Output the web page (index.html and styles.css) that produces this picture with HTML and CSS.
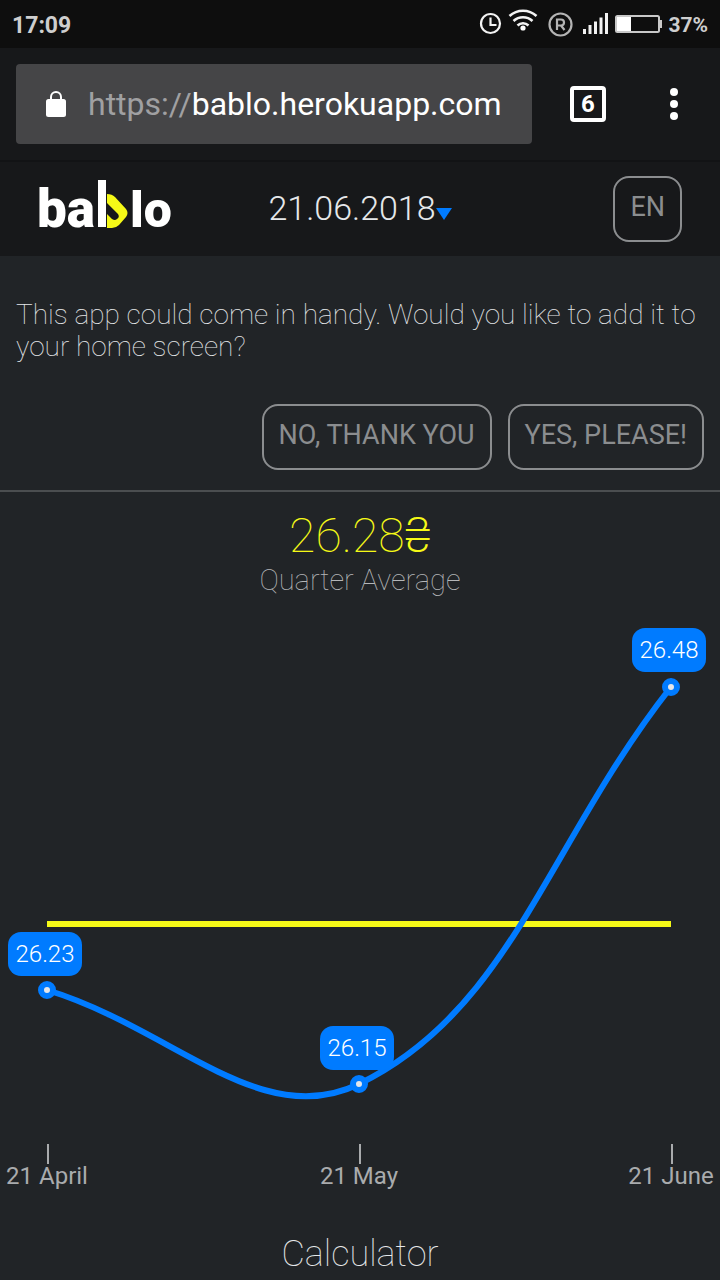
FILE: index.html
```html
<!DOCTYPE html>
<html lang="en">
<head>
<meta charset="utf-8">
<meta name="viewport" content="width=device-width, initial-scale=1">
<title>bablo</title>
<link rel="stylesheet" href="styles.css">
</head>
<body>
<div class="status-bar">
  <span class="clock">17:09</span>
  <svg class="status-icons" width="184" height="32" viewBox="0 0 184 32" aria-hidden="true">
    <g fill="none" stroke="#f2f2f2" stroke-width="2.2">
      <circle cx="12.5" cy="15.5" r="9.5"/>
      <path d="M12.500 9.500v7.500h6"/>
      <path d="M31.500 8a20 20 0 0 1 27 0M35.500 13a14 14 0 0 1 19 0M39.500 17.500a8 8 0 0 1 11 0" stroke-width="2.6"/>
    </g>
    <circle cx="45" cy="20" r="2.600" fill="#fff"/>
    <g fill="none" stroke="#b4b4b4" stroke-width="2.200">
      <circle cx="82.500" cy="16.500" r="11"/>
      <path d="M79 22V11.500h4a3 3 0 0 1 0 6h-4M83 17.500l3.500 4.500"/>
    </g>
    <path d="M105 21h3v5h-3zM110.500 17h3v9h-3zM116 13.500h3V26h-3zM121.500 9.500h3V26h-3zM127 5h3v21h-3z" fill="#f2f2f2"/>
    <rect x="138" y="8" width="43" height="16" rx="1.500" fill="none" stroke="#c8c8c8" stroke-width="2"/>
    <path d="M139 9h14v14h-14z" fill="#fff"/>
    <path d="M182 12h2v8h-2z" fill="#c8c8c8"/>
  </svg>
  <span class="battery">37%</span>
</div>

<div class="browser-bar">
  <div class="address">
    <svg width="20" height="26" viewBox="0 0 20 26" aria-hidden="true">
      <rect y="8" width="20" height="18" rx="2.500" fill="#fff"/>
      <path d="M5 9V6a5 5 0 0 1 10 0v3" fill="none" stroke="#fff" stroke-width="2"/>
    </svg>
    <span class="url"><span class="scheme">https://</span>bablo.herokuapp.com</span>
  </div>
  <button class="tabs" type="button" aria-label="Open tabs">6</button>
  <button class="menu" type="button" aria-label="Menu">
    <svg width="8" height="32" viewBox="0 0 8 32" fill="#fff"><circle cx="4" cy="4" r="4"/><circle cx="4" cy="16" r="4"/><circle cx="4" cy="28" r="4"/></svg>
  </button>
</div>

<header class="app-header">
  <a class="logo" href="#">
    <svg width="134" height="52" viewBox="0 0 134 52" role="img" aria-label="bablo">
      <text class="logo-start" x="-1" y="47">ba</text>
      <path d="M60 0h8v47h-8z" fill="#fff"/>
      <path fill-rule="evenodd" d="M69 14q5 0 8 3l11 12q3 4 0 8l-7 8q-3 3-7 3h-5V34l5 5q3 2 5 0 3-2 1-5L69 23z" fill="#f5f917"/>
      <text x="92" y="47">lo</text>
    </svg>
  </a>
  <button class="date" type="button">21.06.2018<svg width="16" height="12" viewBox="0 0 16 12" aria-hidden="true"><path d="M0 0h16L8 12z" fill="#007bff"/></svg></button>
  <button class="btn language" type="button">EN</button>
</header>

<section class="install">
  <p class="install-text">This app could come in handy. Would you like to add it to your home screen?</p>
  <div class="install-actions">
    <button class="btn" type="button">NO, THANK YOU</button>
    <button class="btn" type="button">YES, PLEASE!</button>
  </div>
</section>

<main>
  <div class="amount">26.28<span class="currency">₴</span></div>
  <div class="caption">Quarter Average</div>
  <svg class="chart" viewBox="0 0 720 592" role="img" aria-label="Rate over the quarter">
    <path class="average" d="M47 324H671"/>
    <path class="rate" d="M47 390C172 428 261 532 359 484C511 410 546 246 671 87"/>
    <g class="point"><circle cx="47" cy="390" r="6"/><circle cx="359" cy="484" r="6"/><circle cx="671" cy="87" r="6"/></g>
    <g class="tag">
      <rect x="8" y="332" width="74" height="44" rx="13"/><text x="45" y="362">26.23</text>
      <rect x="320" y="426" width="74" height="44" rx="13"/><text x="357" y="456">26.15</text>
      <rect x="632" y="28" width="74" height="44" rx="13"/><text x="669" y="58">26.48</text>
    </g>
    <path class="tick" d="M48 544v20M360 544v20M672 544v20"/>
    <g class="axis"><text x="47" y="584">21 April</text><text x="359" y="584">21 May</text><text x="671" y="584">21 June</text></g>
  </svg>
  <h2 class="section-title">Calculator</h2>
</main>
</body>
</html>
```
FILE: styles.css
```css
* { box-sizing: border-box; }

body {
  margin: 0;
  background: #212427;
  color: #e6e8ea;
  font-family: Roboto, "Liberation Sans", sans-serif;
}

button {
  margin: 0;
  padding: 0;
  border: 0;
  background: none;
  color: inherit;
  font: inherit;
}

.status-bar {
  display: flex;
  align-items: center;
  height: 48px;
  padding: 0 12px;
  background: #0e0e0e;
  color: #cecece;
  font-size: 21px;
  font-weight: 700;
}

.clock { flex: 1; padding-top: 2px; font-size: 23px; }
.battery { margin-left: 6px; padding-top: 2px; }
.status-icons { flex: none; }

.browser-bar {
  display: flex;
  align-items: center;
  height: 112px;
  padding: 0 42px 0 16px;
  background: #17181a;
}

.address {
  display: flex;
  flex: 1;
  align-items: center;
  gap: 22px;
  height: 80px;
  padding: 0 30px;
  border-radius: 4px;
  background: #454547;
  color: #fff;
  font-size: 32px;
  white-space: nowrap;
}

.address svg { flex: none; }
.scheme { color: #a0a0a2; }

.tabs {
  width: 36px;
  height: 36px;
  margin-left: 38px;
  border: 4px solid #fff;
  border-radius: 4px;
  color: #fff;
  font-size: 24px;
  font-weight: 700;
  line-height: 28px;
}

.menu { margin-left: 64px; line-height: 0; }

.app-header {
  display: grid;
  grid-template-columns: 1fr auto 1fr;
  align-items: center;
  height: 96px;
  padding: 0 38px;
  border-top: 2px solid #121315;
  background: #17181a;
}

.logo { margin-bottom: 6px; line-height: 0; }
.logo svg { overflow: visible; }
.logo text { fill: #fff; font-size: 50px; font-weight: 900; }
.logo .logo-start { font-size: 53px; }

.date {
  display: flex;
  align-items: center;
  margin-bottom: 2px;
  font-size: 34px;
  font-weight: 300;
}

.date svg { margin-top: 12px; }

.btn {
  height: 66px;
  padding: 0 15px 4px;
  border: 2px solid #8b8d8f;
  border-radius: 16px;
  color: #8b8d8f;
  font-size: 27px;
}

.language { justify-self: end; }

.install {
  padding: 43px 16px 20px;
  border-bottom: 2px solid #4b4e50;
}

.install-text {
  margin: 0 0 41px;
  font-size: 28px;
  font-weight: 100;
  line-height: 32px;
}

.install-actions {
  display: flex;
  justify-content: flex-end;
  gap: 16px;
}

.amount {
  padding-top: 16px;
  color: #f5f917;
  font-size: 48px;
  font-weight: 100;
  line-height: 56px;
  text-align: center;
}

.currency {
  font-family: Inter, Roboto, sans-serif;
  font-size: 48px;
  font-weight: 200;
  line-height: 1;
}

.caption {
  margin-bottom: 4px;
  color: #b4b6b8;
  font-size: 29px;
  font-weight: 100;
  line-height: 32px;
  text-align: center;
}

.chart { display: block; width: 100%; }
.average { stroke: #f5f917; stroke-width: 6; }
.rate { fill: none; stroke: #007bff; stroke-width: 6; }
.point { fill: #e4e6ea; stroke: #007bff; stroke-width: 6; }
.tag { fill: #007bff; }
.tag text { fill: #fff; font-size: 24px; font-weight: 300; text-anchor: middle; }
.tick { stroke: #a9abad; stroke-width: 2; }
.axis { fill: #a9abad; font-size: 24px; text-anchor: middle; }

.section-title {
  margin: 40px 0 0;
  font-size: 36px;
  font-weight: 100;
  line-height: 44px;
  text-align: center;
}
```
